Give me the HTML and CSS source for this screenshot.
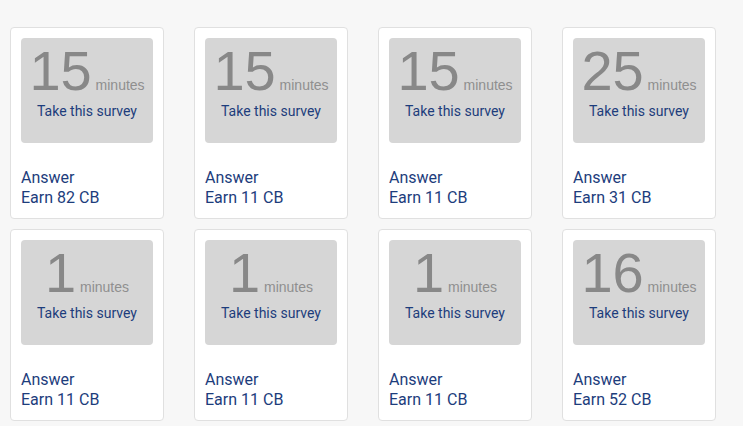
FILE: index.html
```html
<!DOCTYPE html>
<html lang="en">
<head>
    <meta charset="UTF-8">
    <meta name="viewport" content="width=device-width, initial-scale=1.0">
    <title>Surveys</title>
    <link rel="stylesheet" href="styles.css">
</head>
<body>
    <div class="survey-list">
        <div class="survey-card">
            <a class="survey-box" href="#">
                <div class="duration"><span class="num">15</span> <span class="unit">minutes</span></div>
                <div class="take">Take this survey</div>
            </a>
            <div class="info">Answer<br>Earn 82 CB</div>
        </div>
        <div class="survey-card">
            <a class="survey-box" href="#">
                <div class="duration"><span class="num">15</span> <span class="unit">minutes</span></div>
                <div class="take">Take this survey</div>
            </a>
            <div class="info">Answer<br>Earn 11 CB</div>
        </div>
        <div class="survey-card">
            <a class="survey-box" href="#">
                <div class="duration"><span class="num">15</span> <span class="unit">minutes</span></div>
                <div class="take">Take this survey</div>
            </a>
            <div class="info">Answer<br>Earn 11 CB</div>
        </div>
        <div class="survey-card">
            <a class="survey-box" href="#">
                <div class="duration"><span class="num">25</span> <span class="unit">minutes</span></div>
                <div class="take">Take this survey</div>
            </a>
            <div class="info">Answer<br>Earn 31 CB</div>
        </div>
        <div class="survey-card">
            <a class="survey-box" href="#">
                <div class="duration"><span class="num">1</span> <span class="unit">minutes</span></div>
                <div class="take">Take this survey</div>
            </a>
            <div class="info">Answer<br>Earn 11 CB</div>
        </div>
        <div class="survey-card">
            <a class="survey-box" href="#">
                <div class="duration"><span class="num">1</span> <span class="unit">minutes</span></div>
                <div class="take">Take this survey</div>
            </a>
            <div class="info">Answer<br>Earn 11 CB</div>
        </div>
        <div class="survey-card">
            <a class="survey-box" href="#">
                <div class="duration"><span class="num">1</span> <span class="unit">minutes</span></div>
                <div class="take">Take this survey</div>
            </a>
            <div class="info">Answer<br>Earn 11 CB</div>
        </div>
        <div class="survey-card">
            <a class="survey-box" href="#">
                <div class="duration"><span class="num">16</span> <span class="unit">minutes</span></div>
                <div class="take">Take this survey</div>
            </a>
            <div class="info">Answer<br>Earn 52 CB</div>
        </div>
    </div>
</body>
</html>
```

FILE: styles.css
```css
body {
    margin: 0;
    background: #f7f7f7;
    font-family: Roboto, "Liberation Sans", Arial, sans-serif;
    color: #1d3d7c;
}

.survey-list {
    display: grid;
    grid-template-columns: repeat(4, 154px);
    column-gap: 30px;
    row-gap: 10px;
    padding: 27px 10px 5px;
}

.survey-card {
    background: #fff;
    border: 1px solid #e0e0e0;
    border-radius: 4px;
    padding: 10px;
}

.survey-box {
    display: block;
    height: 105px;
    box-sizing: border-box;
    padding-top: 5px;
    background: #d6d6d6;
    border-radius: 4px;
    text-align: center;
    text-decoration: none;
    color: #1d3d7c;
}

.duration {
    font-family: "Liberation Sans", Arial, sans-serif;
    font-size: 14px;
    line-height: 1;
    color: #888;
}

.num {
    font-size: 56px;
    line-height: 56px;
}

.unit {
    color: #8f8f8f;
}

.take {
    margin-top: 4px;
    font-size: 14px;
}

.info {
    margin-top: 25px;
    font-size: 16px;
    line-height: 20px;
}
```
